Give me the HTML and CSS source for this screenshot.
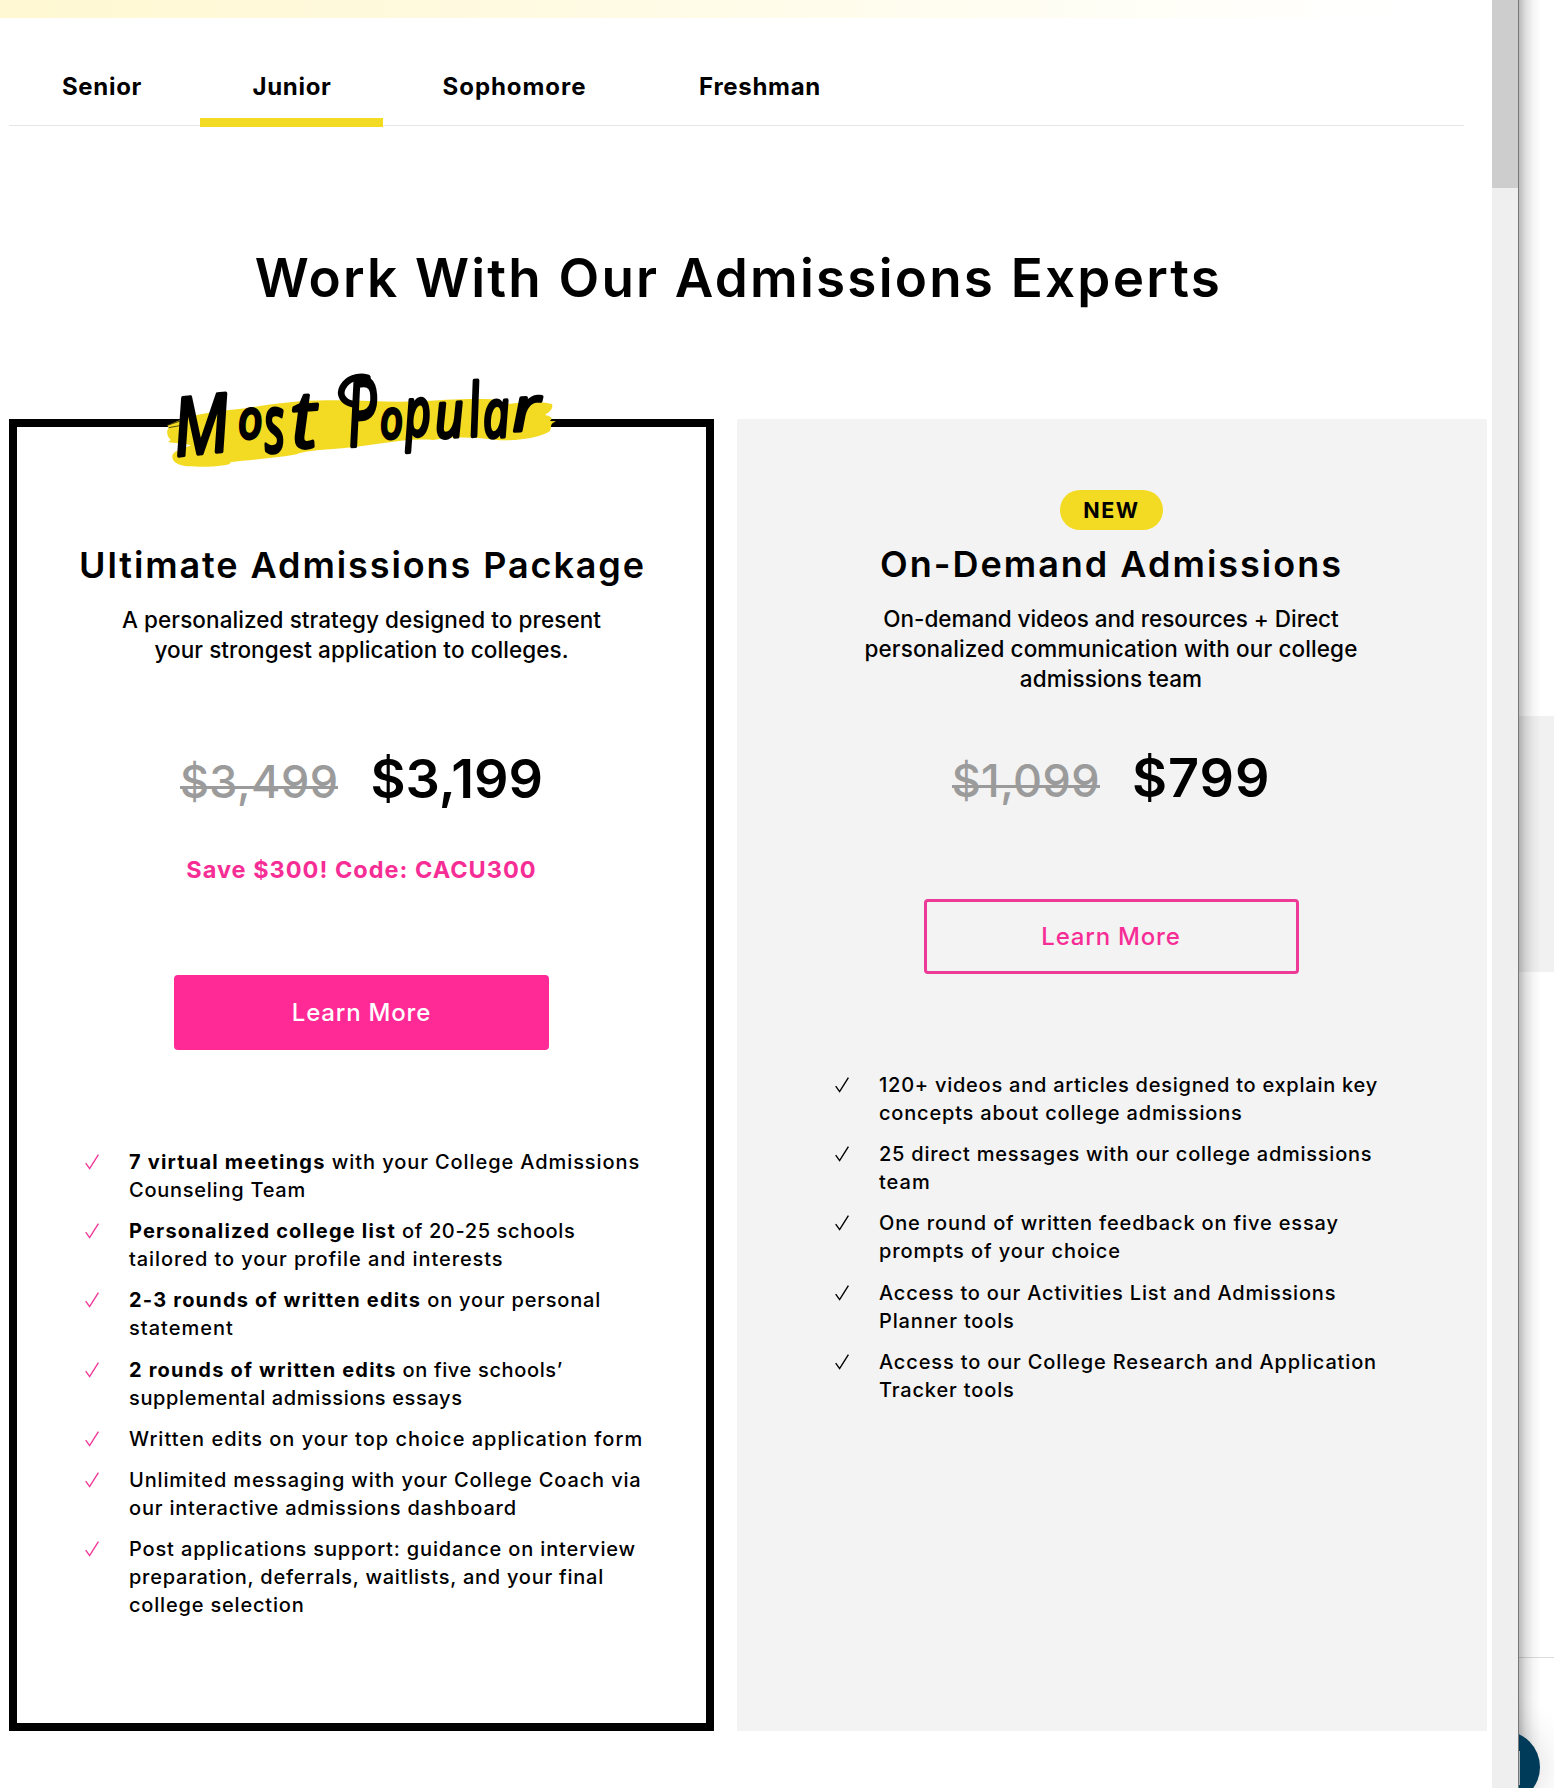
FILE: index.html
```html
<!DOCTYPE html>
<html lang="en">
<head>
<meta charset="utf-8">
<title>Work With Our Admissions Experts</title>
<link rel="stylesheet" href="styles.css">
</head>
<body>
<svg class="defs" aria-hidden="true">
  <symbol id="check" viewBox="0 0 14 16">
    <path d="M.7 9.1 L4.6 14.6 L13.4 .6" fill="none" stroke="currentColor" stroke-width="1.4"/>
  </symbol>
</svg>
<div class="screen">
  <div class="window">
    <div class="page">
      <div class="banner"></div>
      <nav class="tabs">
        <a class="tab">Senior</a>
        <a class="tab tab-active">Junior</a>
        <a class="tab tab-wide">Sophomore</a>
        <a class="tab">Freshman</a>
      </nav>
      <h1 class="heading">Work With Our Admissions Experts</h1>

      <div class="cards">
        <section class="card card-featured">
          <svg class="ribbon" viewBox="0 0 1260 360" role="img" aria-label="Most Popular">
            <path fill="#f4db23" d="M52 196 L100 176 C145 160 230 150 300 143 C360 132 460 119 550 121 C640 120 720 128 800 124 C870 120 960 114 1025 118 C1045 122 1060 132 1080 131 C1130 124 1180 124 1206 132 C1212 150 1190 160 1186 165 C1210 170 1206 178 1200 183 L1218 184 C1195 194 1208 200 1199 214 C1170 232 1120 242 1050 241 C980 232 920 228 850 240 C760 232 650 262 540 268 C480 272 450 278 440 283 C380 294 300 300 240 307 C250 314 200 321 150 320 C110 320 85 318 72 304 C62 290 66 276 88 270 C98 260 116 262 122 256 C100 248 72 250 54 246 L62 240 C48 226 50 210 56 203 Z"/>
            <path fill="none" stroke="#000" stroke-width="2" d="M52 196 L106 178 M56 203 L106 194"/>
            <g class="ribbon-text">
              <text transform="translate(78 288) rotate(-6) scale(1 1.2)">M</text>
              <text transform="translate(268 236) rotate(-4) scale(.64 .8)">o</text>
              <text transform="translate(348 277) rotate(-4) scale(.7 1.18)">s</text>
              <text transform="translate(428 265) rotate(-4) scale(1.15 1.18)">t</text>
              <text transform="translate(598 259) rotate(-4) scale(.8 1.4)">P</text>
              <text transform="translate(694 236) rotate(-4) scale(.6 .8)">o</text>
              <text transform="translate(768 229) rotate(-4) scale(.68 1)">p</text>
              <text transform="translate(858 234) rotate(-4) scale(.76 .95)">u</text>
              <text transform="translate(962 229) rotate(-6) scale(.72 1.08)">l</text>
              <text transform="translate(1003 233) rotate(-4) scale(.7 1)">a</text>
              <text transform="translate(1088 214) rotate(-3) scale(1.08 .92)">r</text>
            </g>
            <path class="ribbon-curl" d="M607 132 C580 126 566 105 578 82 C592 56 622 46 652 53"/>
          </svg>
          <h2 class="title">Ultimate Admissions Package</h2>
          <p class="summary"><span>A personalized strategy designed to present</span> <span>your strongest application to colleges.</span></p>
          <div class="prices"><s class="price-old">$3,499</s><strong class="price-now">$3,199</strong></div>
          <p class="promo">Save $300! Code: CACU300</p>
          <a class="button button-solid">Learn More</a>
          <ul class="features features-pink">
            <li><svg class="check"><use href="#check"/></svg><p><span class="ls-l"><b>7 virtual meetings</b> with your College Admissions</span> <span class="ls-s">Counseling Team</span></p></li>
            <li><svg class="check"><use href="#check"/></svg><p><span class="ls-xs"><b>Personalized college list</b> of 20-25 schools</span> <span class="ls-l">tailored to your profile and interests</span></p></li>
            <li><svg class="check"><use href="#check"/></svg><p><span><b>2-3 rounds of written edits</b> on your personal</span> <span class="ls-xl">statement</span></p></li>
            <li><svg class="check"><use href="#check"/></svg><p><span class="ls-xs"><b>2 rounds of written edits</b> on five schools’</span> <span class="ls-xs">supplemental admissions essays</span></p></li>
            <li><svg class="check"><use href="#check"/></svg><p><span class="ls-xl">Written edits on your top choice application form</span></p></li>
            <li><svg class="check"><use href="#check"/></svg><p><span class="ls-m">Unlimited messaging with your College Coach via</span> <span>our interactive admissions dashboard</span></p></li>
            <li><svg class="check"><use href="#check"/></svg><p><span class="ls-m">Post applications support: guidance on interview</span> <span class="ls-s">preparation, deferrals, waitlists, and your final</span> <span>college selection</span></p></li>
          </ul>
        </section>

        <section class="card card-plain">
          <span class="badge">NEW</span>
          <h2 class="title title-wide">On-Demand Admissions</h2>
          <p class="summary"><span class="summary-tight">On-demand videos and resources + Direct</span> <span class="summary-wide">personalized communication with our college</span> <span>admissions team</span></p>
          <div class="prices prices-plain"><s class="price-old">$1,099</s><strong class="price-now price-wide">$799</strong></div>
          <a class="button button-outline">Learn More</a>
          <ul class="features">
            <li><svg class="check"><use href="#check"/></svg><p><span class="ls-s">120+ videos and articles designed to explain key</span> <span>concepts about college admissions</span></p></li>
            <li><svg class="check"><use href="#check"/></svg><p><span class="ls-s">25 direct messages with our college admissions</span> <span class="ls-xl">team</span></p></li>
            <li><svg class="check"><use href="#check"/></svg><p><span class="ls-m">One round of written feedback on five essay</span> <span class="ls-l">prompts of your choice</span></p></li>
            <li><svg class="check"><use href="#check"/></svg><p><span>Access to our Activities List and Admissions</span> <span class="ls-m">Planner tools</span></p></li>
            <li><svg class="check"><use href="#check"/></svg><p><span class="ls-m">Access to our College Research and Application</span> <span class="ls-m">Tracker tools</span></p></li>
          </ul>
        </section>
      </div>
    </div>
    <div class="scrollbar"><div class="thumb"></div></div>
  </div>
  <div class="behind">
    <div class="behind-band"></div>
    <div class="behind-rule"></div>
    <div class="chat"></div>
  </div>
</div>
</body>
</html>
```
FILE: styles.css
```css
* { box-sizing: border-box; }
body {
  margin: 0;
  background: #fff;
  color: #000;
  font-family: Inter, "Liberation Sans", sans-serif;
}
h1, h2, p, ul { margin: 0; padding: 0; }
ul { list-style: none; }
.defs { display: none; }

.screen { display: flex; height: 1788px; overflow: hidden; }
.window { display: flex; flex: none; width: 1519px; border-right: 1px solid #777; }
.page { width: 1492px; background: #fff; }
.scrollbar { width: 26px; background: #efefef; }
.thumb { height: 188px; background: #cdcdcd; }

.banner {
  height: 18px;
  background: linear-gradient(90deg, #fff8d2 0, #fffae0 500px, #fffdf0 950px, #fff 1400px);
}

.tabs {
  display: grid;
  grid-template-columns: 186px 183px 253px 228px;
  column-gap: 5px;
  width: 1455px;
  height: 53px;
  margin: 55px 0 0 9px;
  border-bottom: 1px solid #e6e6e6;
}
.tab {
  height: 54px;
  font-size: 24px;
  font-weight: 650;
  line-height: 28px;
  letter-spacing: .7px;
  text-align: center;
}
.tab-wide { letter-spacing: .95px; }
.tab-active { padding-left: 1px; border-bottom: 9px solid #f4db23; }

.heading {
  width: 1477px;
  margin-top: 122px;
  font-size: 53px;
  font-weight: 600;
  line-height: 61px;
  letter-spacing: 2.2px;
  text-align: center;
}

.cards {
  display: grid;
  grid-template-columns: 705px 750px;
  column-gap: 23px;
  height: 1312px;
  margin: 110px 0 0 9px;
}
.card { position: relative; display: flex; flex-direction: column; align-items: center; }
.card-featured { padding-top: 116px; border: 8px solid #000; }
.card-plain { padding: 71px 2px 0 0; background: #f3f3f3; }

.ribbon { position: absolute; top: -67px; left: 133px; width: 420px; height: 120px; overflow: visible; }
.ribbon-text {
  font-family: "Open Sans", sans-serif;
  font-size: 200px;
  font-style: italic;
  font-weight: 400;
  stroke: #000;
  stroke-width: 3.6px;
  stroke-linejoin: round;
}
.ribbon-text text { vector-effect: non-scaling-stroke; }
.ribbon-curl { fill: none; stroke: #000; stroke-width: 20; stroke-linecap: round; }

.badge {
  width: 103px;
  height: 40px;
  margin-bottom: 12px;
  padding-left: 1px;
  border-radius: 20px;
  background: #f4db23;
  font-size: 21.5px;
  font-weight: 750;
  line-height: 40px;
  letter-spacing: 1.6px;
  text-align: center;
}
.title {
  padding-left: 2px;
  font-size: 36px;
  font-weight: 600;
  line-height: 44px;
  letter-spacing: 1.9px;
  white-space: nowrap;
}
.title-wide { padding-left: 1px; letter-spacing: 2px; }
.summary {
  margin-top: 18px;
  font-size: 22.5px;
  font-weight: 500;
  line-height: 30px;
  letter-spacing: .08px;
  text-align: center;
}
.summary span, .features span { display: block; white-space: nowrap; }
.summary-tight { letter-spacing: -.03px; }
.summary-wide { letter-spacing: .12px; }
.prices {
  display: flex;
  gap: 32px;
  align-items: baseline;
  height: 60px;
  margin-top: 84px;
  line-height: 60px;
}
.prices-plain { margin-top: 54px; }
.price-old {
  background: linear-gradient(#9b9b9b, #9b9b9b) 0 29px / 100% 3px no-repeat;
  color: #9b9b9b;
  font-size: 45px;
  font-weight: 550;
  line-height: 50px;
  letter-spacing: .4px;
  text-decoration: none;
}
.price-now { font-size: 54px; font-weight: 600; }
.price-wide { letter-spacing: .9px; }
.promo {
  margin-top: 46px;
  color: #f72d96;
  font-size: 23.5px;
  font-weight: 650;
  line-height: 30px;
  letter-spacing: 1px;
}
.button {
  display: flex;
  align-items: center;
  justify-content: center;
  width: 375px;
  height: 75px;
  border-radius: 4px;
  font-size: 24px;
  font-weight: 500;
  letter-spacing: .8px;
}
.button-solid { margin-top: 90px; background: #ff2a96; color: #fff; }
.button-outline { margin-top: 91px; border: 3px solid #ec3a96; color: #f72d96; }

.features {
  display: flex;
  flex-direction: column;
  gap: 13.4px;
  align-self: stretch;
  margin: 98px 0 0 98px;
  font-size: 20px;
  font-weight: 500;
  line-height: 27.9px;
  letter-spacing: .81px;
}
.features-pink { margin: 99px 0 0 67.5px; }
.features li { display: grid; grid-template-columns: 44px auto; }
.features-pink li { grid-template-columns: 44.5px auto; }
.features b { font-weight: 700; letter-spacing: 1.2px; }
.check { width: 14px; height: 16px; margin-top: 5px; }
.features-pink .check { color: #f0389a; }
.ls-xs { letter-spacing: .64px; }
.ls-s { letter-spacing: .75px; }
.ls-m { letter-spacing: .85px; }
.ls-l { letter-spacing: .91px; }
.ls-xl { letter-spacing: 1px; }

.behind {
  position: relative;
  flex: none;
  width: 35px;
  padding-top: 716px;
  background: #fff;
}
.behind-band { height: 256px; background: #f1f1f1; }
.behind-rule { height: 1px; margin-top: 685px; background: #dcdcdc; }
.chat {
  position: absolute;
  top: 1731px;
  left: -51px;
  width: 72px;
  height: 72px;
  border-radius: 50%;
  background: #003c5a;
  box-shadow: 0 0 40px rgba(0, 0, 0, .16);
  clip-path: inset(-60px -60px -60px 51px);
}
.chat::after {
  content: "";
  position: absolute;
  top: 20px;
  left: 51px;
  width: 1px;
  height: 34px;
  background: #a9b6bd;
}
.behind::before {
  content: "";
  position: absolute;
  inset: 0 auto 0 0;
  width: 22px;
  background: linear-gradient(90deg, rgba(0, 0, 0, .27), rgba(0, 0, 0, .13) 30%, rgba(0, 0, 0, .04) 65%, transparent);
}
```
